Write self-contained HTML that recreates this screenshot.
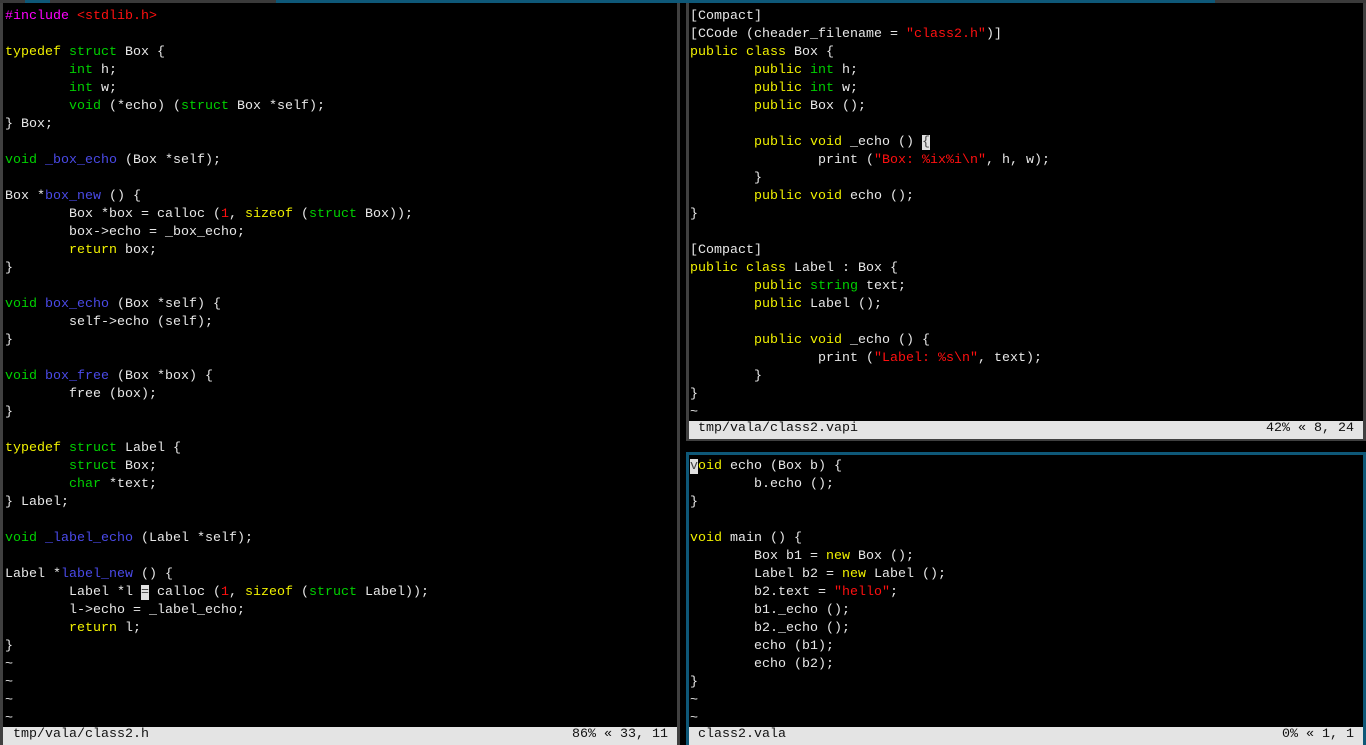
<!DOCTYPE html>
<html><head><meta charset="utf-8"><style>
*{margin:0;padding:0}
body{width:1366px;height:745px;background:#000;position:relative;overflow:hidden;font-family:"Liberation Mono",monospace;font-size:13.33px;color:#e8e8e8}
.d{position:absolute}
pre{position:absolute;font:inherit;line-height:18px;white-space:pre}
.k{color:#f0f000}.t{color:#00d000}.f{color:#4a4ae8}.s{color:#ff1010}.p{color:#ff00ff}
.c{background:#e0e0e0;color:#444}
.st{position:absolute;height:18px;background:#e4e4e4;color:#111;line-height:20px;font:inherit}
.st span{position:absolute;top:0}
</style></head><body>
<div class="d" style="left:0;top:0;width:1366px;height:3px;background:#3a3a3a"></div>
<div class="d" style="left:25px;top:0;width:25px;height:3px;background:#0e5878"></div>
<div class="d" style="left:276px;top:0;width:939px;height:3px;background:#0e5878"></div>
<div class="d" style="left:0;top:3px;width:3px;height:742px;background:#404040"></div>
<div class="d" style="left:677px;top:3px;width:3px;height:742px;background:#404040"></div>
<div class="d" style="left:686px;top:3px;width:3px;height:438px;background:#404040"></div>
<div class="d" style="left:1363px;top:3px;width:3px;height:438px;background:#404040"></div>
<div class="d" style="left:686px;top:438px;width:680px;height:3px;background:#404040"></div>
<div class="d" style="left:686px;top:452px;width:680px;height:3px;background:#0e5878"></div>
<div class="d" style="left:686px;top:452px;width:3px;height:293px;background:#0e5878"></div>
<div class="d" style="left:1363px;top:452px;width:3px;height:293px;background:#0e5878"></div>

<pre style="left:5px;top:8px"><span class="p">#include</span> <span class="s">&lt;stdlib.h&gt;</span>

<span class="k">typedef</span> <span class="t">struct</span> Box {
        <span class="t">int</span> h;
        <span class="t">int</span> w;
        <span class="t">void</span> (*echo) (<span class="t">struct</span> Box *self);
} Box;

<span class="t">void</span> <span class="f">_box_echo</span> (Box *self);

Box *<span class="f">box_new</span> () {
        Box *box = calloc (<span class="s">1</span>, <span class="k">sizeof</span> (<span class="t">struct</span> Box));
        box-&gt;echo = _box_echo;
        <span class="k">return</span> box;
}

<span class="t">void</span> <span class="f">box_echo</span> (Box *self) {
        self-&gt;echo (self);
}

<span class="t">void</span> <span class="f">box_free</span> (Box *box) {
        free (box);
}

<span class="k">typedef</span> <span class="t">struct</span> Label {
        <span class="t">struct</span> Box;
        <span class="t">char</span> *text;
} Label;

<span class="t">void</span> <span class="f">_label_echo</span> (Label *self);

Label *<span class="f">label_new</span> () {
        Label *l <span class="c">=</span> calloc (<span class="s">1</span>, <span class="k">sizeof</span> (<span class="t">struct</span> Label));
        l-&gt;echo = _label_echo;
        <span class="k">return</span> l;
}
~
~
~
~</pre>
<div class="st" style="left:3px;top:727px;width:674px"><span style="left:10px">tmp/vala/class2.h</span><span style="left:569px">86% « 33, 11</span></div>

<pre style="left:690px;top:8px">[Compact]
[CCode (cheader_filename = <span class="s">"class2.h"</span>)]
<span class="k">public</span> <span class="k">class</span> Box {
        <span class="k">public</span> <span class="t">int</span> h;
        <span class="k">public</span> <span class="t">int</span> w;
        <span class="k">public</span> Box ();

        <span class="k">public</span> <span class="k">void</span> _echo () <span class="c">{</span>
                print (<span class="s">"Box: %ix%i\n"</span>, h, w);
        }
        <span class="k">public</span> <span class="k">void</span> echo ();
}

[Compact]
<span class="k">public</span> <span class="k">class</span> Label : Box {
        <span class="k">public</span> <span class="t">string</span> text;
        <span class="k">public</span> Label ();

        <span class="k">public</span> <span class="k">void</span> _echo () {
                print (<span class="s">"Label: %s\n"</span>, text);
        }
}
~</pre>
<div class="st" style="left:689px;top:421px;width:674px"><span style="left:9px">tmp/vala/class2.vapi</span><span style="left:577px">42% « 8, 24</span></div>

<pre style="left:690px;top:458px"><span class="c">v</span><span class="k">oid</span> echo (Box b) {
        b.echo ();
}

<span class="k">void</span> main () {
        Box b1 = <span class="k">new</span> Box ();
        Label b2 = <span class="k">new</span> Label ();
        b2.text = <span class="s">"hello"</span>;
        b1._echo ();
        b2._echo ();
        echo (b1);
        echo (b2);
}
~
~</pre>
<div class="st" style="left:689px;top:727px;width:674px"><span style="left:9px">class2.vala</span><span style="left:593px">0% « 1, 1</span></div>
</body></html>
